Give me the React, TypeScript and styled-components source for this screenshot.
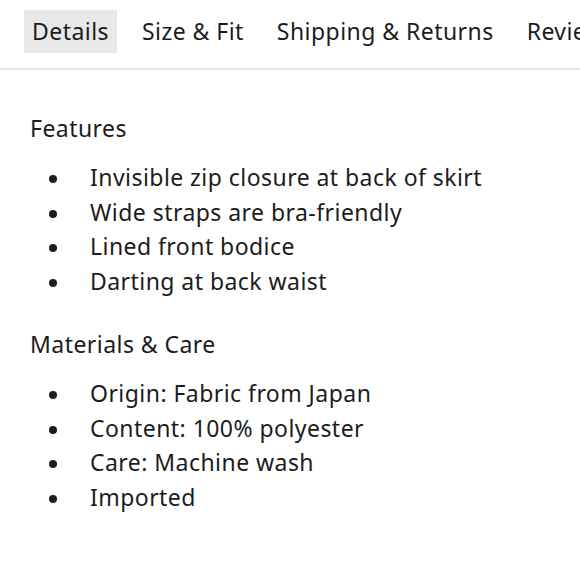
import styled, { createGlobalStyle } from "styled-components"

const GlobalStyle = createGlobalStyle`
  body {
    margin: 0;
    background: #fff;
    font-family: "Noto Sans", sans-serif;
    color: #1c1c1c;
  }
`

const tabs = ["Details", "Size & Fit", "Shipping & Returns", "Reviews"]

const sections = [
  {
    title: "Features",
    items: [
      "Invisible zip closure at back of skirt",
      "Wide straps are bra-friendly",
      "Lined front bodice",
      "Darting at back waist",
    ],
  },
  {
    title: "Materials & Care",
    items: [
      "Origin: Fabric from Japan",
      "Content: 100% polyester",
      "Care: Machine wash",
      "Imported",
    ],
  },
]

const App = () => {
  return (
    <>
      <GlobalStyle />
      <Wrapper>
        <TabBar>
          {tabs.map((tab, i) => (
            <Tab key={tab} $active={i === 0}>
              {tab}
            </Tab>
          ))}
        </TabBar>

        <Content>
          {sections.map((section) => (
            <Section key={section.title}>
              <Heading>{section.title}</Heading>
              <List>
                {section.items.map((item) => (
                  <Item key={item}>
                    <Bullet />
                    <span>{item}</span>
                  </Item>
                ))}
              </List>
            </Section>
          ))}
        </Content>
      </Wrapper>
    </>
  )
}

export default App

const Wrapper = styled.div({
  width: 580,
  height: 580,
  overflow: "hidden",
  fontSize: 23,
  letterSpacing: "0.45px",
})

const TabBar = styled.div({
  display: "flex",
  gap: 17,
  padding: "10px 0 15px 24px",
  borderBottom: "2px solid #e6e6e6",
  whiteSpace: "nowrap",
  overflow: "hidden",
})

const Tab = styled.div<{ $active?: boolean }>(({ $active }) => ({
  flexShrink: 0,
  height: 43,
  lineHeight: "43px",
  padding: "0 8px",
  background: $active ? "#e8e8e8" : "transparent",
}))

const Content = styled.div({
  display: "flex",
  flexDirection: "column",
  gap: 29,
  padding: "41px 0 0 30px",
})

const Section = styled.div({
  display: "flex",
  flexDirection: "column",
  gap: 15,
})

const Heading = styled.div({
  lineHeight: "34px",
})

const List = styled.ul({
  margin: 0,
  padding: 0,
  listStyle: "none",
})

const Item = styled.li({
  display: "flex",
  alignItems: "center",
  lineHeight: "34.5px",
})

const Bullet = styled.span({
  width: 8,
  height: 8,
  borderRadius: "50%",
  background: "#1c1c1c",
  margin: "4px 33px 0 19px",
  flexShrink: 0,
})
